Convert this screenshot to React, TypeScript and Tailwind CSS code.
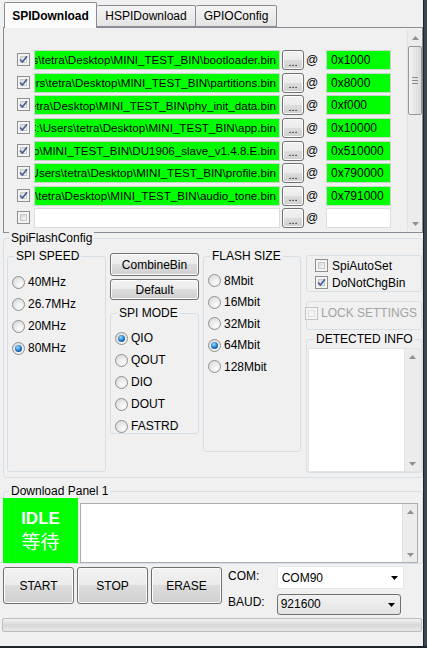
import React from "react";

const FONT = "font-['Liberation_Sans','Noto_Sans_CJK_SC',Arial,sans-serif]";

const DIR = "C:\\Users\\tetra\\Desktop\\MINI_TEST_BIN\\";

const files = [
  { path: DIR + "bootloader.bin", addr: "0x1000" },
  { path: DIR + "partitions.bin", addr: "0x8000" },
  { path: DIR + "phy_init_data.bin", addr: "0xf000" },
  { path: DIR + "app.bin", addr: "0x10000" },
  { path: DIR + "DU1906_slave_v1.4.8.E.bin", addr: "0x510000" },
  { path: DIR + "profile.bin", addr: "0x790000" },
  { path: DIR + "audio_tone.bin", addr: "0x791000" },
  { path: "", addr: "" },
];

// win7 style checkbox
const CheckBox = ({ checked, disabled }: { checked?: boolean; disabled?: boolean }) => (
  <div
    className={`relative w-[13px] h-[13px] shrink-0 border bg-[#f4f4f4] p-[2px] ${
      disabled ? "border-[#c4c4c4]" : "border-[#8e8f8f]"
    }`}
  >
    <div
      className={`w-full h-full ${
        disabled ? "bg-[#f4f4f4] border border-[#e0e0e0]" : "bg-linear-to-br from-[#d9d9d9] to-[#f9f9f9] border border-[#c8c8c8]"
      }`}
    />
    {checked && (
      <svg className="absolute left-0 top-0" width="11" height="11" viewBox="0 0 11 11">
        <path d="M2 5.5 L4.4 8 L9 2.2" stroke="#4a5f97" strokeWidth="1.7" fill="none" />
      </svg>
    )}
  </div>
);

const Radio = ({ checked }: { checked?: boolean }) => (
  <div className="w-[13px] h-[13px] shrink-0 rounded-full border border-[#8e8f8f] bg-[radial-gradient(circle_at_65%_70%,#fdfdfd,#d4d4d4)] flex items-center justify-center">
    {checked && (
      <div className="w-[7px] h-[7px] rounded-full bg-[radial-gradient(circle_at_40%_35%,#9fe0ff,#1d6fc2_55%,#0b3a72)]" />
    )}
  </div>
);

const RadioRow = ({ label, checked, h }: { label: string; checked?: boolean; h: string }) => (
  <div className={`flex items-center gap-[3px] ${h}`}>
    <Radio checked={checked} />
    <span>{label}</span>
  </div>
);

const Button = ({ children, className }: { children: React.ReactNode; className: string }) => (
  <div
    className={`flex items-center justify-center rounded-[3px] border border-[#707070] shadow-[inset_0_0_0_1px_#fcfcfc] bg-[linear-gradient(#f2f2f2,#ebebeb_50%,#dddddd_50%,#cfcfcf)] ${className}`}
  >
    {children}
  </div>
);

const GroupBox = ({
  label,
  className,
  children,
  labelClass = "left-[6px]",
}: {
  label?: string;
  className: string;
  children?: React.ReactNode;
  labelClass?: string;
}) => (
  <div className={`relative border border-[#d5dfe5] rounded-[3px] ${className}`}>
    {label && (
      <span className={`absolute -top-[8px] ${labelClass} px-[2px] bg-[#f0f0f0] leading-[14px] whitespace-nowrap`}>
        {label}
      </span>
    )}
    {children}
  </div>
);

const UpArrow = () => (
  <svg width="7" height="4" viewBox="0 0 7 4">
    <path d="M0 4 L3.5 0 L7 4 Z" fill="#909090" />
  </svg>
);
const DownArrow = ({ color = "#909090" }: { color?: string }) => (
  <svg width="7" height="4" viewBox="0 0 7 4">
    <path d="M0 0 L7 0 L3.5 4 Z" fill={color} />
  </svg>
);

const ScrollBar = ({ thumb }: { thumb?: boolean }) => (
  <div className="w-[15px] h-full bg-[#ececec] border-l border-[#e2e2e2] flex flex-col items-center">
    <div className="h-[15px] w-full flex items-center justify-center">
      <UpArrow />
    </div>
    {thumb ? (
      <div className="mt-[1px] w-[14px] h-[69px] rounded-[2px] border border-[#979797] bg-linear-to-r from-[#f3f3f3] to-[#d9d9d9] flex flex-col items-center justify-center gap-[2px]">
        <div className="w-[6px] h-px bg-[#8a8a8a]" />
        <div className="w-[6px] h-px bg-[#8a8a8a]" />
        <div className="w-[6px] h-px bg-[#8a8a8a]" />
      </div>
    ) : null}
    <div className="flex-1" />
    <div className="h-[15px] w-full flex items-center justify-center">
      <DownArrow />
    </div>
  </div>
);

export default function App() {
  return (
    <div className={`w-[427px] h-[648px] flex flex-col bg-[#2d3a44] text-[12px] text-black ${FONT}`}>
      <div className="flex h-[646px]">
        <div className="w-[423px] h-full bg-[#f0f0f0] flex flex-col">
          {/* Tabs */}
          <div className="h-[27px] pt-[2px] pl-[4px] flex items-end">
            <div className="relative z-10 -mb-px w-[93px] h-[26px] rounded-t-[2px] border border-b-0 border-[#898c95] bg-[#fbfbfb] flex items-center justify-center font-bold">
              SPIDownload
            </div>
            <div className="w-[99px] h-[22px] rounded-t-[2px] border border-l-0 border-[#898c95] bg-linear-to-b from-[#f4f4f4] to-[#e4e4e4] flex items-center justify-center">
              HSPIDownload
            </div>
            <div className="w-[81px] h-[22px] rounded-t-[2px] border border-l-0 border-[#898c95] bg-linear-to-b from-[#f4f4f4] to-[#e4e4e4] flex items-center justify-center">
              GPIOConfig
            </div>
          </div>

          {/* Tab page with file list */}
          <div className="ml-[3px] w-[420px] h-[206px] border border-[#898c95] bg-[#f0f0f0] flex pt-[2px] pb-[1px]">
            <div className="flex-1 pt-[20px] pl-[13px] flex flex-col">
              {files.map((f, i) => (
                <div key={i} className="h-[23px] flex items-start">
                  <div className="h-[19px] flex items-center">
                    <CheckBox checked={f.path !== ""} />
                  </div>
                  <div
                    className={`ml-[4px] w-[246px] h-[20px] border overflow-hidden flex items-center justify-end pr-[3px] whitespace-nowrap text-[11.6px] ${
                      f.path ? "bg-[#00ff00] border-[#c9d6c9]" : "bg-white border-[#dcdcdc]"
                    }`}
                  >
                    <span className="shrink-0">{f.path}</span>
                  </div>
                  <Button className="ml-[2px] w-[22px] h-[20px] text-[11px] leading-none">
                    <span className="mt-[4px]">...</span>
                  </Button>
                  <span className="ml-[2px] w-[20px] h-[20px] flex items-center">@</span>
                  <div
                    className={`w-[65px] h-[20px] border flex items-center pl-[4px] ${
                      f.addr ? "bg-[#00ff00] border-[#c9d6c9]" : "bg-white border-[#dcdcdc]"
                    }`}
                  >
                    {f.addr}
                  </div>
                </div>
              ))}
            </div>
            <ScrollBar thumb />
          </div>

          {/* SpiFlashConfig */}
          <GroupBox label="SpiFlashConfig" className="mt-[5px] ml-[3px] w-[420px] h-[240px]" labelClass="left-[5px]">
            <div className="flex items-start pl-[3px]">
              <GroupBox label="SPI SPEED" className="mt-[17px] w-[99px] h-[216px] pt-[14px] pl-[4px]" labelClass="left-[6px]">
                <RadioRow label="40MHz" h="h-[22px]" />
                <RadioRow label="26.7MHz" h="h-[22px]" />
                <RadioRow label="20MHz" h="h-[22px]" />
                <RadioRow label="80MHz" h="h-[22px]" checked />
              </GroupBox>

              <div className="ml-[4px] w-[89px] flex flex-col">
                <Button className="mt-[14px] h-[23px]">CombineBin</Button>
                <Button className="mt-[3px] h-[21px]">Default</Button>
                <GroupBox label="SPI MODE" className="mt-[13px] h-[121px] pt-[13px] pl-[4px]" labelClass="left-[6px]">
                  <RadioRow label="QIO" h="h-[22px]" checked />
                  <RadioRow label="QOUT" h="h-[22px]" />
                  <RadioRow label="DIO" h="h-[22px]" />
                  <RadioRow label="DOUT" h="h-[22px]" />
                  <RadioRow label="FASTRD" h="h-[22px]" />
                </GroupBox>
              </div>

              <GroupBox label="FLASH SIZE" className="ml-[4px] mt-[17px] w-[98px] h-[196px] pt-[13px] pl-[4px]" labelClass="left-[6px]">
                <RadioRow label="8Mbit" h="h-[21.5px]" />
                <RadioRow label="16Mbit" h="h-[21.5px]" />
                <RadioRow label="32Mbit" h="h-[21.5px]" />
                <RadioRow label="64Mbit" h="h-[21.5px]" checked />
                <RadioRow label="128Mbit" h="h-[21.5px]" />
              </GroupBox>

              <div className="ml-[5px] w-[116px] flex flex-col">
                <GroupBox className="mt-[16px] h-[37px] pl-[8px] pt-[1px]">
                  <div className="h-[17px] flex items-center gap-[4px]">
                    <CheckBox />
                    <span>SpiAutoSet</span>
                  </div>
                  <div className="h-[17px] flex items-center gap-[4px]">
                    <CheckBox checked />
                    <span>DoNotChgBin</span>
                  </div>
                </GroupBox>
                <GroupBox className="mt-[9px] h-[29px]">
                  <div className="-ml-[2px] mt-[4px] h-[14px] flex items-center gap-[3px] text-[#a3a3a3] whitespace-nowrap">
                    <CheckBox disabled />
                    <span>LOCK SETTINGS</span>
                  </div>
                </GroupBox>
                <GroupBox label="DETECTED INFO" className="mt-[9px] h-[134px] pt-[8px] px-[1px]" labelClass="left-[7px]">
                  <div className="h-[124px] bg-white border border-[#e3e3e3] flex justify-end">
                    <ScrollBar />
                  </div>
                </GroupBox>
              </div>
            </div>
          </GroupBox>

          {/* Download Panel 1 */}
          <GroupBox label="Download Panel 1" className="mt-[13px] ml-[3px] w-[420px] h-[73px]" labelClass="left-[5px]">
            <div className="flex -ml-px mt-[6px]">
              <div className="w-[75px] h-[65px] bg-[#00ff00] text-white flex flex-col items-center justify-center">
                <span className="text-[17px] font-bold leading-[20px]">IDLE</span>
                <span className="text-[19px] leading-[24px] font-['Noto_Sans_CJK_SC',sans-serif]">等待</span>
              </div>
              <div className="ml-[2px] mt-[5px] w-[338px] h-[60px] bg-white border border-[#abadb3] flex justify-end">
                <ScrollBar />
              </div>
            </div>
          </GroupBox>

          {/* Buttons + COM */}
          <div className="flex mt-[2px] ml-[3px]">
            <Button className="w-[71px] h-[37px] mt-[1px]">START</Button>
            <Button className="ml-[3px] w-[71px] h-[37px] mt-[1px]">STOP</Button>
            <Button className="ml-[3px] w-[71px] h-[37px] mt-[1px]">ERASE</Button>
            <div className="ml-[6px] flex flex-col">
              <span className="h-[20px] flex items-center">COM:</span>
              <span className="h-[20px] flex items-center mt-[6px]">BAUD:</span>
            </div>
            <div className="ml-[12px] flex flex-col">
              <div className="w-[127px] h-[23px] bg-white border border-[#e6e6e6] flex items-center pl-[4px] pr-[5px] justify-between">
                <span>COM90</span>
                <DownArrow color="#000" />
              </div>
              <div className="mt-[5px] w-[124px] h-[21px] rounded-[3px] border border-[#707070] bg-linear-to-b from-[#f2f2f2] to-[#e3e3e3] flex items-end pb-[1px] pl-[3px] pr-[5px] justify-between">
                <span>921600</span>
                <div className="mb-[6px]">
                  <DownArrow color="#000" />
                </div>
              </div>
            </div>
          </div>

          {/* Progress bar */}
          <div className="mt-[3px] ml-[2px] w-[420px] h-[14px] rounded-[2px] border border-[#bcbcbc] bg-linear-to-b from-[#f3f3f3] via-[#d8d8d8] to-[#e6e6e6]" />
        </div>
        <div className="w-[4px] h-full bg-[#3a4650] border-l border-[#1f2428]" />
      </div>
      <div className="h-[2px] bg-[#1f2428]" />
    </div>
  );
}
